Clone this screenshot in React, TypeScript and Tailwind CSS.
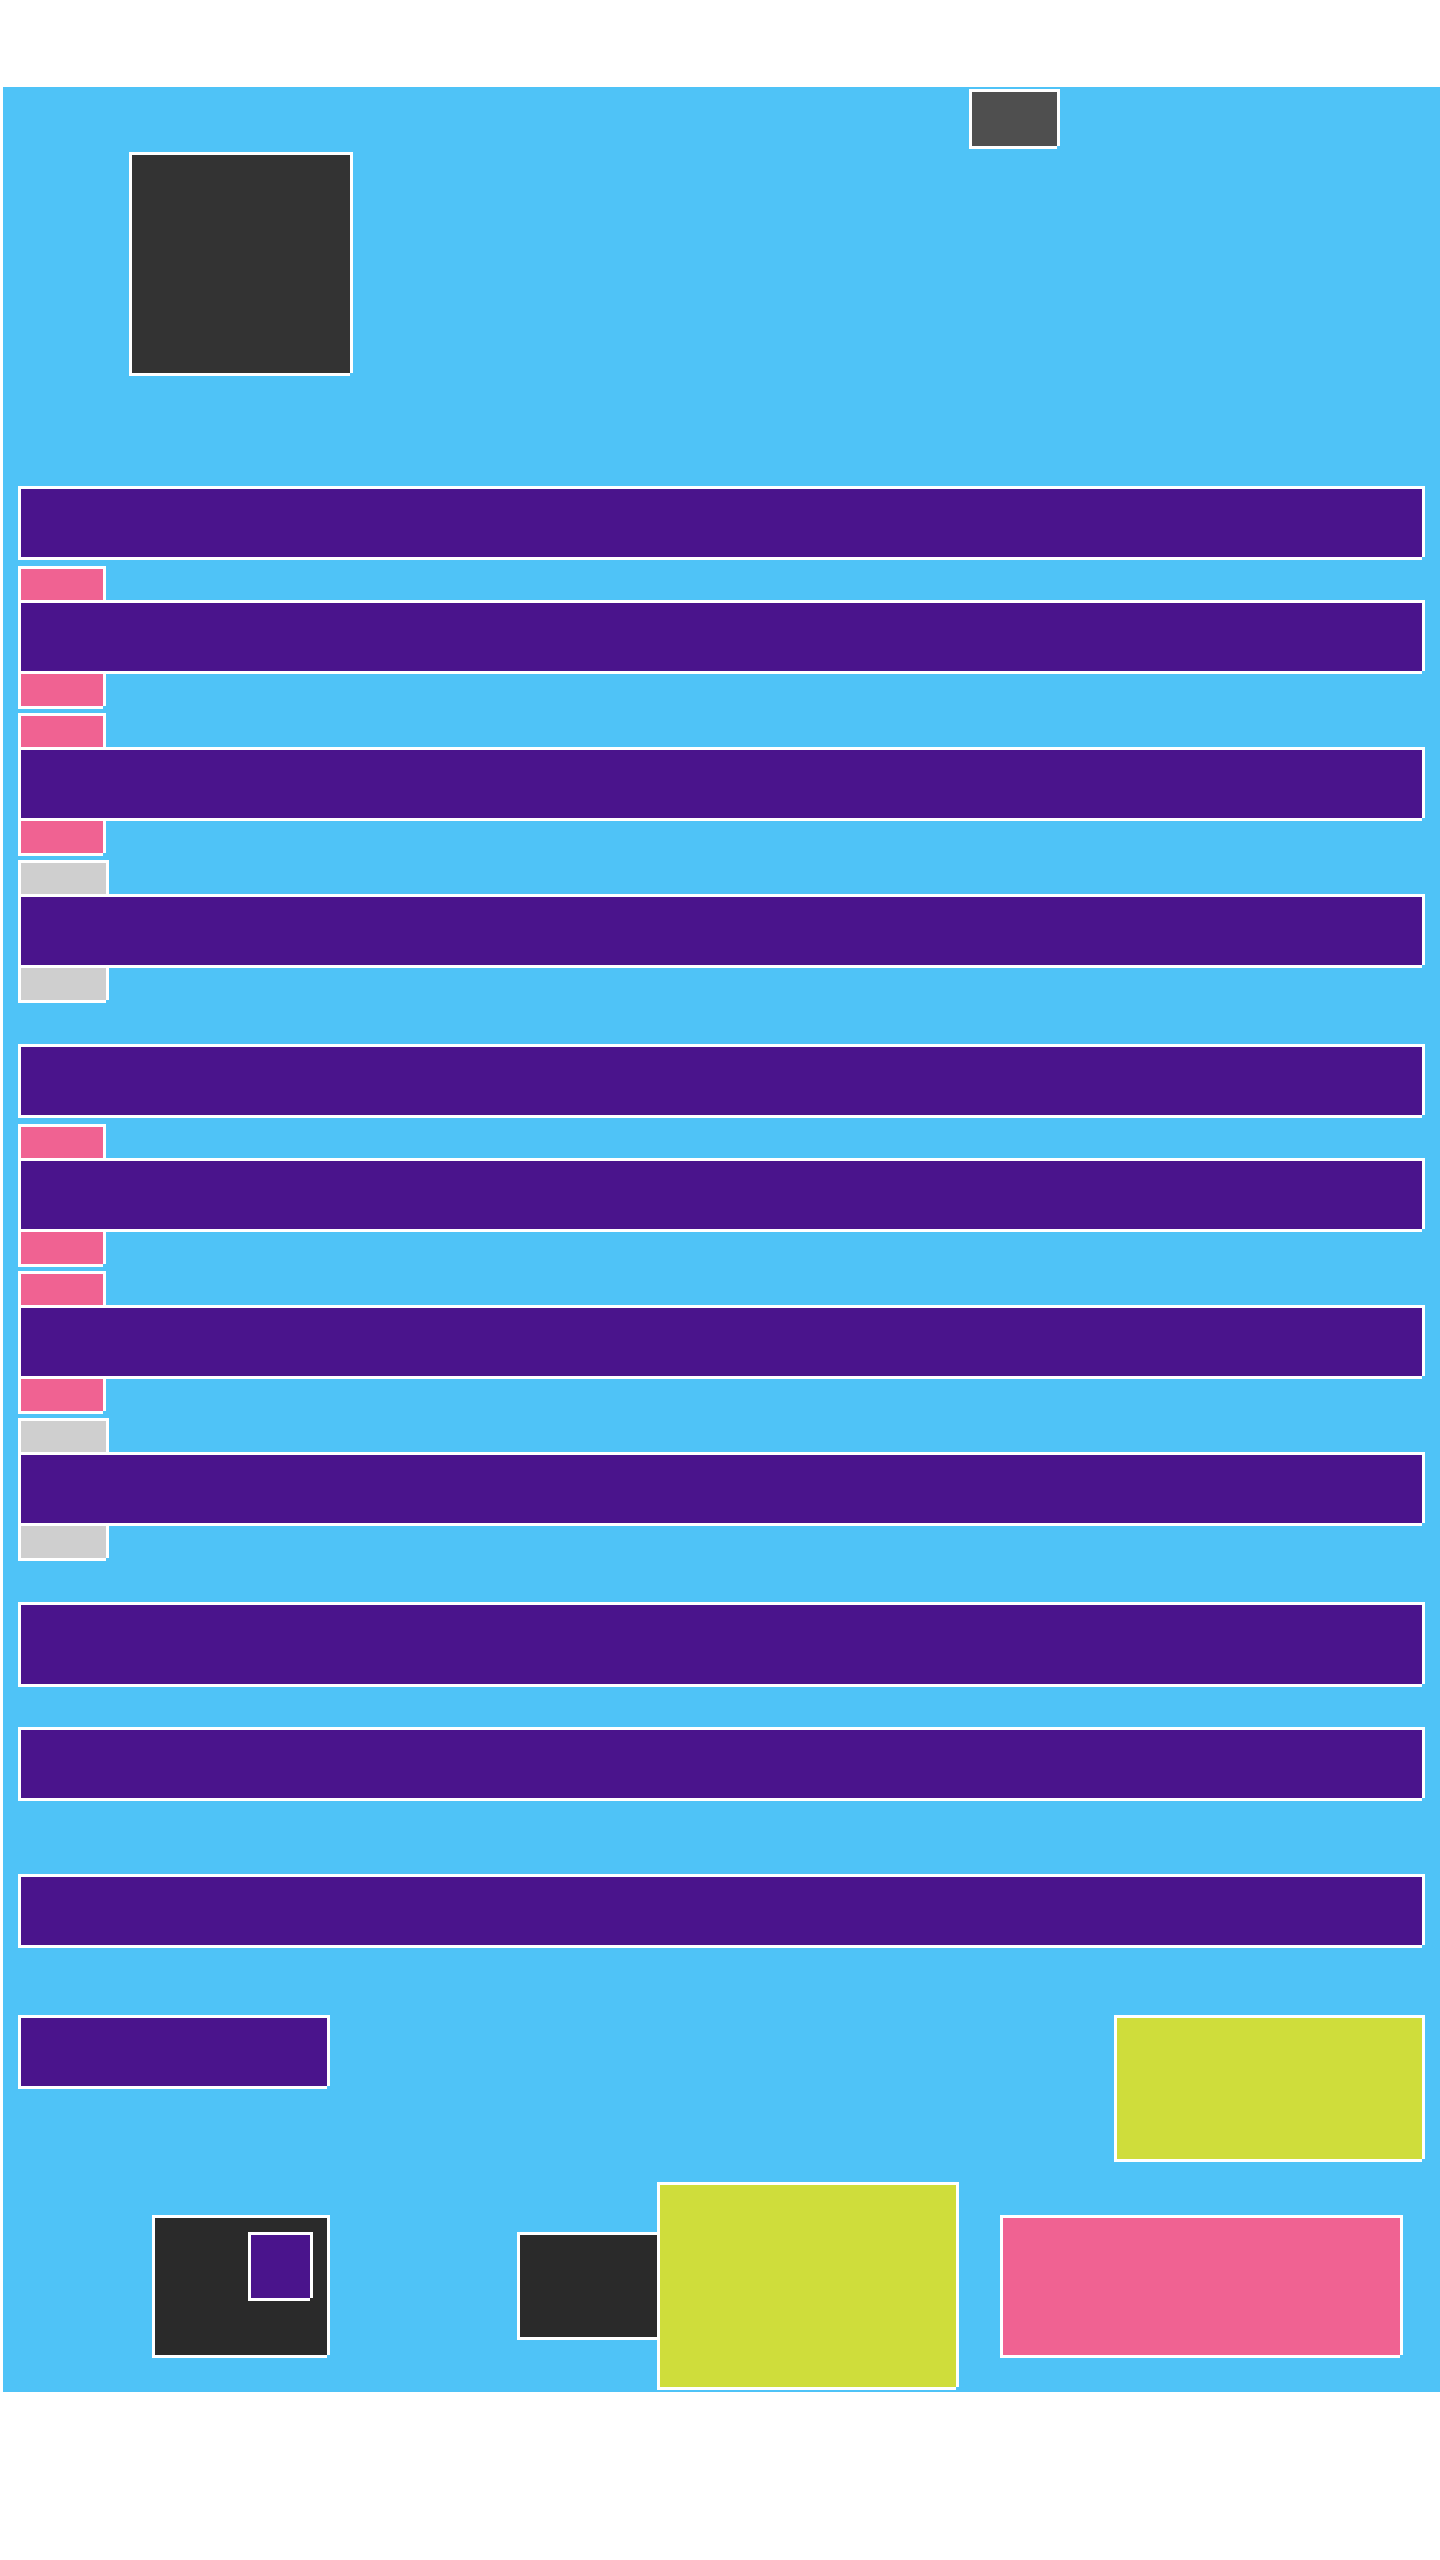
import React from "react";

const F = "border-t-[3px] border-l-[3px] border-white shadow-[3px_0_0_0_#ffffff,0_3px_0_0_#ffffff] shrink-0";
const PURPLE = "bg-[#4a148c]";
const PINK = "bg-[#f06292]";
const GRAY = "bg-[#cfcfcf]";
const LIME = "bg-[#cfdd3b]";

function Group({ side }: { side: "pink" | "gray" }) {
  const sideCls = side === "pink" ? `${PINK} w-[85px]` : `${GRAY} w-[88px]`;
  return (
    <div className="flex flex-col">
      <div className={`${F} ${sideCls} h-[34px]`} />
      <div className={`${F} ${PURPLE} w-full h-[71px]`} />
      <div className={`${F} ${sideCls} h-[35px]`} />
    </div>
  );
}

function Section() {
  return (
    <div className="flex flex-col">
      <div className={`${F} ${PURPLE} w-full h-[71px]`} />
      <div className="mt-[9px] flex flex-col gap-[7px]">
        <Group side="pink" />
        <Group side="pink" />
        <Group side="gray" />
      </div>
    </div>
  );
}

export default function App() {
  return (
    <div className="min-h-[2560px] bg-white pt-[87px] pl-[3px]">
      <div className="w-[1437px] bg-[#4fc3f7] pl-[15px] pr-[18px] pb-[5px] flex flex-col">
        <div className="flex items-start pt-[2px]">
          <div className={`${F} bg-[#333333] w-[221px] h-[221px] ml-[111px] mt-[63px]`} />
          <div className={`${F} bg-[#4f4f4f] w-[88px] h-[57px] ml-[619px]`} />
        </div>
        <div className="mt-[113px]">
          <Section />
        </div>
        <div className="mt-[44px]">
          <Section />
        </div>
        <div className={`${F} ${PURPLE} w-full h-[82px] mt-[44px]`} />
        <div className={`${F} ${PURPLE} w-full h-[71px] mt-[43px]`} />
        <div className={`${F} ${PURPLE} w-full h-[71px] mt-[76px]`} />
        <div className="mt-[70px] flex items-start justify-between">
          <div className={`${F} ${PURPLE} w-[309px] h-[71px]`} />
          <div className={`${F} ${LIME} w-[308px] h-[144px]`} />
        </div>
        <div className="mt-[23px] flex items-center h-[205px]">
          <div className={`${F} bg-[#2a2a2a] w-[175px] h-[140px] ml-[134px] pl-[93px] pt-[14px]`}>
            <div className={`${F} ${PURPLE} w-[62px] h-[66px]`} />
          </div>
          <div className={`${F} bg-[#2a2a2a] w-[140px] h-[105px] ml-[190px]`} />
          <div className={`${F} ${LIME} w-[299px] h-[205px]`} />
          <div className={`${F} ${PINK} w-[400px] h-[140px] ml-[44px]`} />
        </div>
      </div>
    </div>
  );
}
